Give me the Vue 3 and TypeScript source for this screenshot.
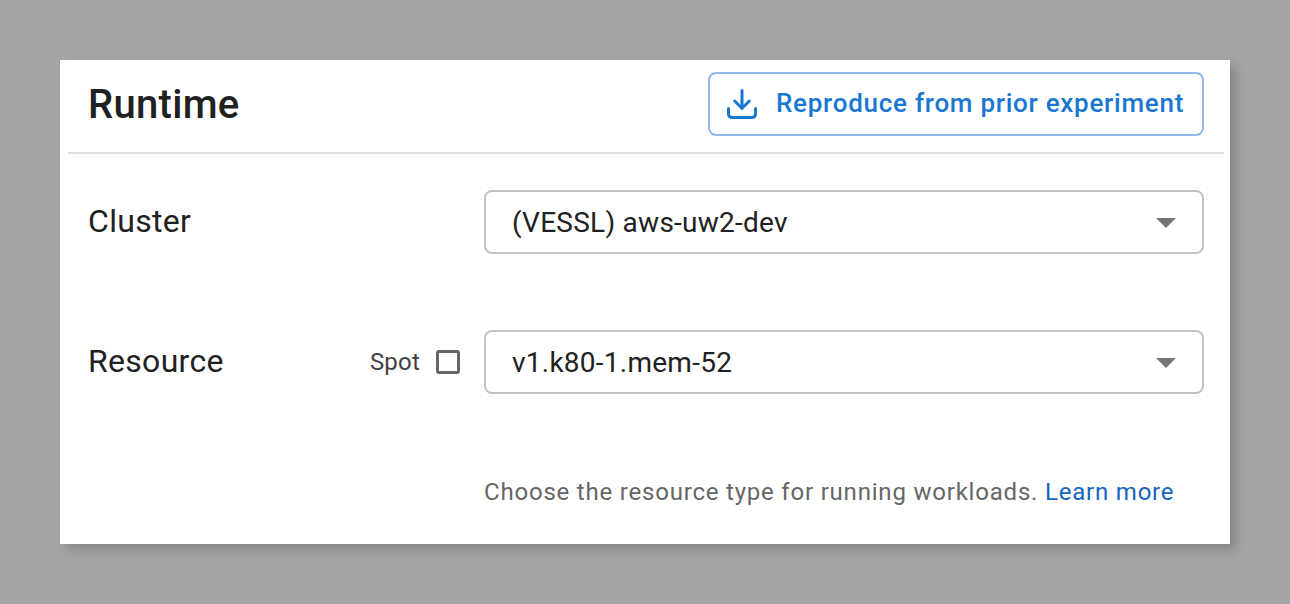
<script setup lang="ts">
import { ref } from 'vue'

const cluster = ref<string>('(VESSL) aws-uw2-dev')
const resource = ref<string>('v1.k80-1.mem-52')
const spot = ref<boolean>(false)
</script>

<template>
  <main class="page">
    <section class="card">
      <header class="header">
        <h2 class="title">Runtime</h2>
        <button class="reproduce" type="button">
          <svg class="download" width="32" height="32" viewBox="0 0 32 32" fill="none" stroke="currentColor" stroke-width="3" stroke-linecap="round" stroke-linejoin="round">
            <path d="M16 2.5V20" />
            <path d="M8.7 13L16 20.3L23.3 13" />
            <path d="M2.5 20.5V25.5Q2.5 29.5 6.5 29.5H25.5Q29.5 29.5 29.5 25.5V20.5" />
          </svg>
          <span>Reproduce from prior experiment</span>
        </button>
      </header>

      <div class="row">
        <span class="label">Cluster</span>
        <div class="select" role="combobox">
          <span>{{ cluster }}</span>
          <svg class="arrow" width="20" height="10" viewBox="0 0 20 10"><path d="M0 0H20L10 10Z" fill="#757575" /></svg>
        </div>
      </div>

      <div class="row">
        <span class="label">Resource</span>
        <div class="spot" role="checkbox" :aria-checked="spot" @click="spot = !spot">
          <span class="spot-label">Spot</span>
          <span class="box" :class="{ checked: spot }"></span>
        </div>
        <div class="select" role="combobox">
          <span>{{ resource }}</span>
          <svg class="arrow" width="20" height="10" viewBox="0 0 20 10"><path d="M0 0H20L10 10Z" fill="#757575" /></svg>
        </div>
      </div>

      <p class="help">Choose the resource type for running workloads. <a class="link">Learn more</a></p>
    </section>
  </main>
</template>

<style>
body {
  background: #a5a5a5;
}
</style>

<style scoped>
.page {
  box-sizing: border-box;
  height: 604px;
  padding: 60px;
  background: #a5a5a5;
  font-family: Roboto, "Liberation Sans", sans-serif;
  color: #212121;
  overflow: hidden;
}
.card {
  box-sizing: border-box;
  width: 1170px;
  height: 484px;
  background: #fff;
  box-shadow: 6px 6px 10px rgba(0, 0, 0, 0.18);
}
.header {
  box-sizing: border-box;
  display: flex;
  align-items: center;
  justify-content: space-between;
  height: 94px;
  margin: 0 6px 0 8px;
  padding: 0 20px 4px;
  border-bottom: 2px solid #e0e0e0;
}
.title {
  margin: 0;
  padding-top: 2px;
  font-size: 40px;
  line-height: 64px;
  font-weight: 500;
  letter-spacing: 0.3px;
}
.reproduce {
  box-sizing: border-box;
  display: flex;
  align-items: center;
  width: 496px;
  height: 64px;
  padding: 0 0 0 16px;
  border: 2px solid #8fb8ea;
  border-radius: 8px;
  background: transparent;
  color: #1976d2;
  font: 500 26px/44px Roboto, "Liberation Sans", sans-serif;
  letter-spacing: 0.73px;
  white-space: nowrap;
}
.reproduce span {
  padding-bottom: 2px;
}
.download {
  margin-right: 18px;
}
.row {
  display: flex;
  align-items: center;
  height: 64px;
  margin: 36px 26px 0 28px;
}
.row + .row {
  margin-top: 76px;
}
.label {
  padding-bottom: 2px;
  font-size: 32px;
  letter-spacing: 0.3px;
}
.select {
  box-sizing: border-box;
  display: flex;
  align-items: center;
  justify-content: space-between;
  width: 720px;
  height: 64px;
  margin-left: auto;
  padding: 0 26px;
  border: 2px solid #c4c4c4;
  border-radius: 8px;
  font-size: 28px;
  letter-spacing: 0.25px;
  white-space: nowrap;
}
.arrow {
  margin-top: 2px;
}
.spot {
  display: flex;
  align-items: center;
  gap: 16px;
  margin-left: auto;
}
.spot + .select {
  margin-left: 24px;
}
.spot-label {
  font-size: 24px;
  letter-spacing: 0.2px;
  color: #424242;
}
.box {
  box-sizing: border-box;
  width: 24px;
  height: 24px;
  border: 3px solid #666;
  border-radius: 3px;
}
.box.checked {
  background: #1976d2;
  border-color: #1976d2;
}
.help {
  margin: 78px 0 0 424px;
  font-size: 24px;
  line-height: 40px;
  letter-spacing: 0.795px;
  color: #666;
  white-space: nowrap;
}
.link {
  color: #1565c0;
}
</style>
